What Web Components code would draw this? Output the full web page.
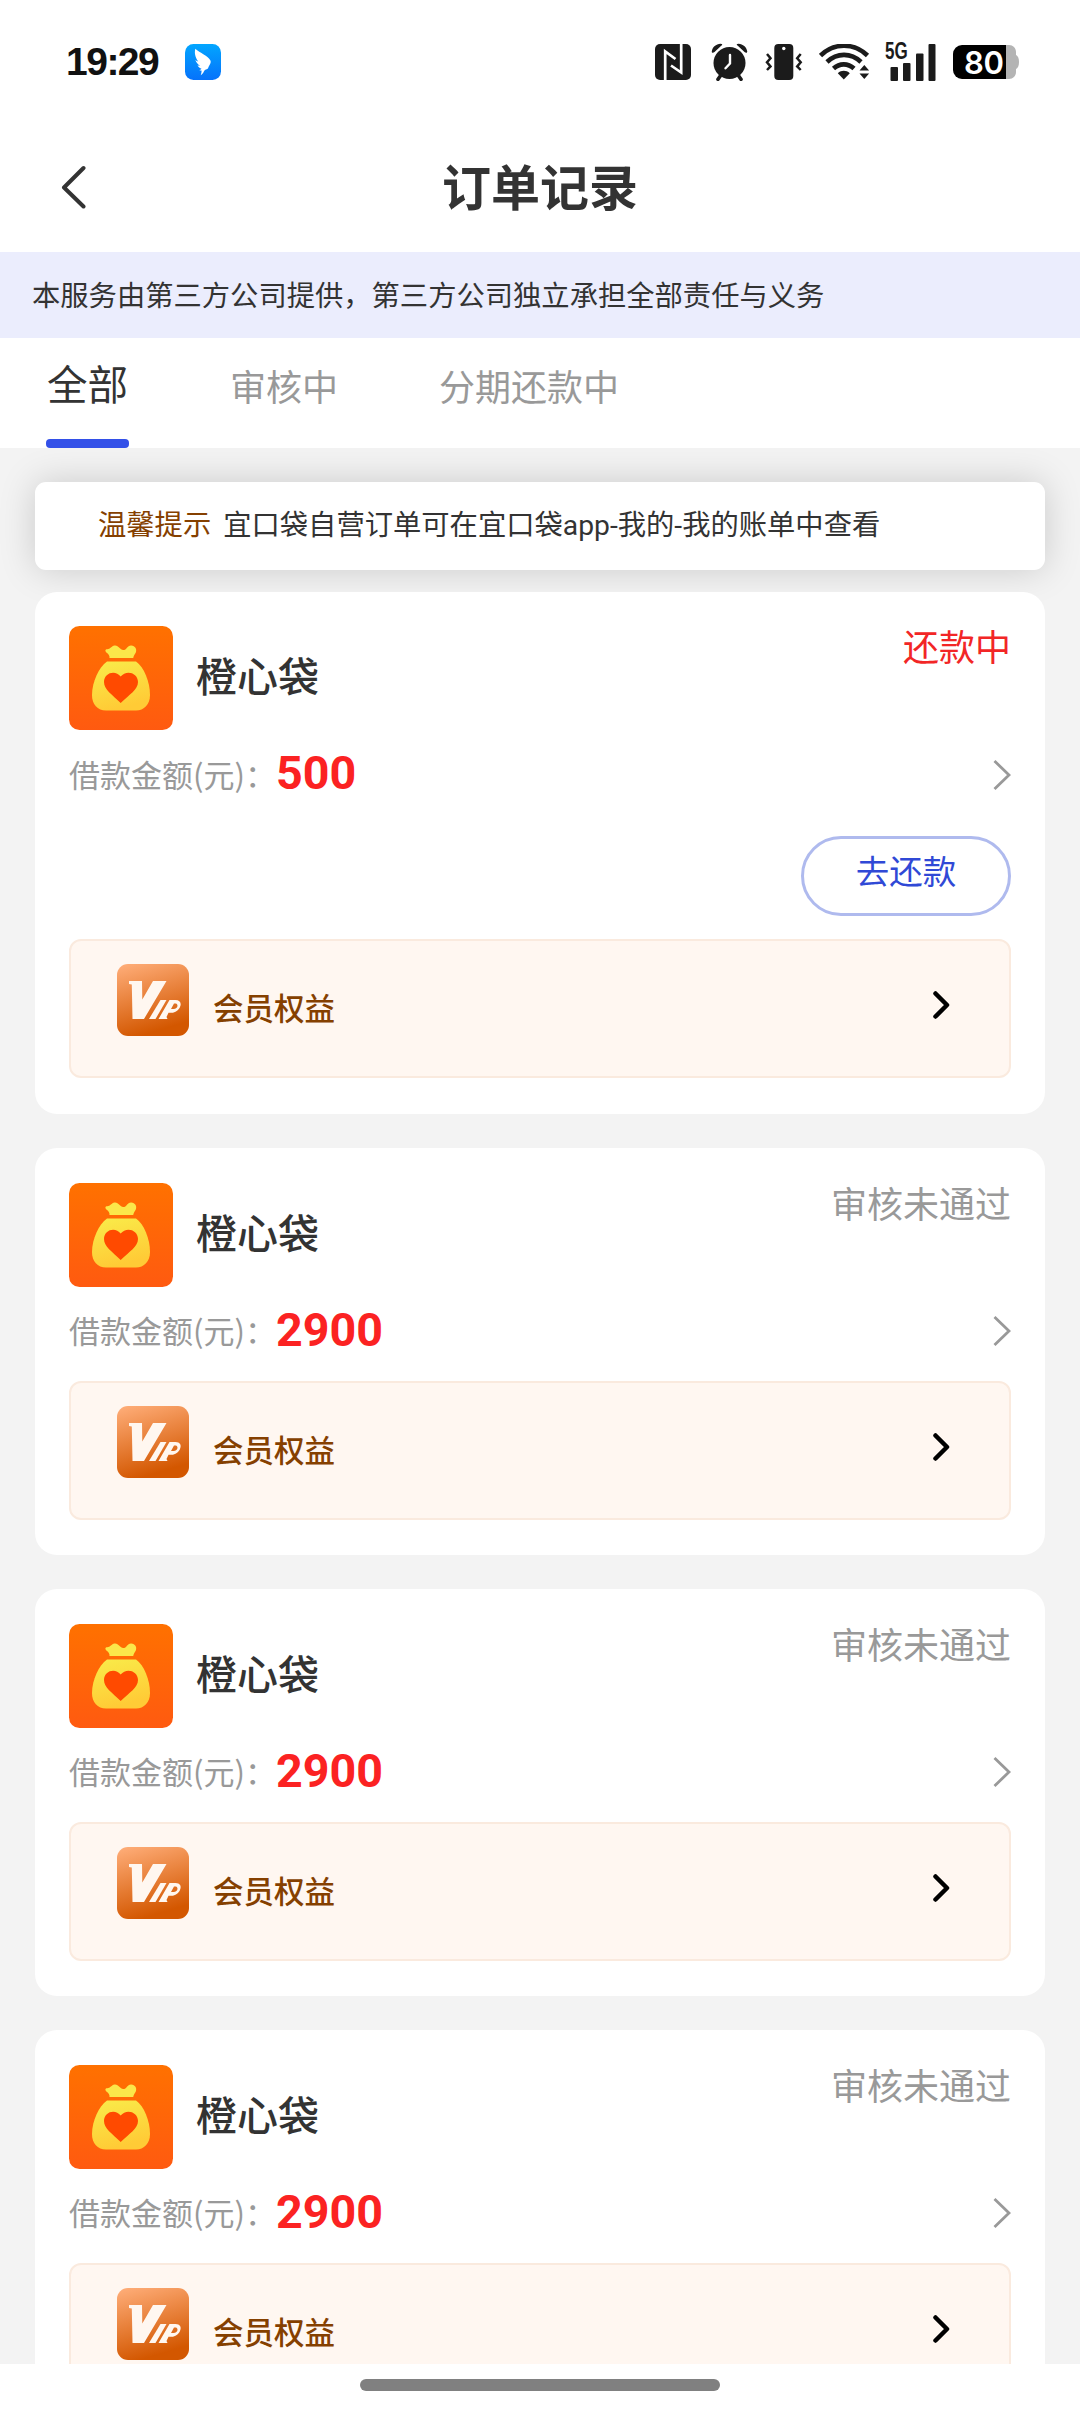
<!DOCTYPE html>
<html lang="zh-CN">
<head>
<meta charset="utf-8">
<title>订单记录</title>
<style>
html,body{margin:0;padding:0;background:#fff}
body{width:1080px;height:2412px;overflow:hidden;font-family:"Noto Sans CJK SC",sans-serif;color:#333}
</style>
</head>
<body>
<order-page></order-page>
<script>
function define(name, html) {
  const t = document.createElement('template');
  t.innerHTML = html;
  customElements.define(name, class extends HTMLElement {
    constructor() {
      super();
      this.attachShadow({mode: 'open'}).appendChild(t.content.cloneNode(true));
    }
  });
}

define('status-bar', `
<style>
:host{display:flex;align-items:center;height:124px;padding:0 61px 0 66px;box-sizing:border-box}
.time{font:700 39px/40px "Liberation Sans",sans-serif;letter-spacing:-1.5px;color:#111;width:119px;white-space:nowrap}
.icons{display:flex;align-items:center;margin-left:auto}
svg{display:block;flex:none}
.bat{display:flex;align-items:center;margin-left:17px;width:66px;height:34px}
.lvl{width:53px;height:34px;box-sizing:border-box;padding-left:11px;background:#000;border-radius:9px 0 0 9px;font:600 31px/36px Inter,sans-serif;letter-spacing:-.3px;color:#fff;white-space:nowrap}
.sig{display:flex;position:relative;margin-left:14px}
.g{position:absolute;left:0;top:-3px;font:700 23px/20px "Liberation Sans",sans-serif;color:#1b1b1b;transform:scaleX(.74);transform-origin:0 0}
</style>
<span class="time">19:29</span>
<svg width="36" height="36" viewBox="0 0 36 36"><defs><linearGradient id="a" x1="0" y1="0" x2="0" y2="1"><stop offset="0" stop-color="#02a6ff"/><stop offset="1" stop-color="#0672fb"/></linearGradient></defs><rect width="36" height="36" rx="8.5" fill="url(#a)"/><path d="M10.300 4.800c4.500 4.200 13 7.200 15 11.500 1.500 2.700-1.500 5.300-2.300 8.300-1.200.8-2.600 1-3.300 1.600-1 1.200-1.500 3.500-4 5.100.6-1.600 1-3.700.8-4.700-1.300.1-1.800-.3-2-.6 1-.3 1.800-.8 2-1.200-1.500-.3-3.200-2-4-3.500 1 .4 2 .6 2.700.6-1.600-1-4.200-3.500-4.900-6 1 .8 2 1.300 3 1.600C11.300 15 8.900 10.500 10.300 4.800z" fill="#fff"/></svg>
<div class="icons">
<svg width="36" height="36" viewBox="0 0 36 36"><rect width="36" height="36" rx="5" fill="#1b1b1b"/><path d="M10.200 36V7.500L20.500 15M26.200 0V28.500L16 21.500" fill="none" stroke="#fff" stroke-width="2.700"/></svg>
<svg style="margin-left:20px" width="37" height="38" viewBox="0 0 37 38"><circle cx="18.500" cy="20" r="16" fill="#1b1b1b"/><path d="m10 32-3 4.300M27 32l3 4.300" stroke="#1b1b1b" stroke-width="3.600" stroke-linecap="round"/><path d="M.8 8.200C1.500 4 5 1 9.500.700c2 0 2.200 1 1 1.900L3.500 9C2 10.300.6 10 .8 8.200zM36.200 8.200C35.500 4 32 1 27.500.700c-2 0-2.200 1-1 1.900L33.500 9c1.500 1.300 2.900 1 2.700-.8z" fill="#1b1b1b"/><path d="M19 12v8.500l-4.500 4.800" fill="none" stroke="#fff" stroke-width="2.400" stroke-linecap="round" stroke-linejoin="round"/></svg>
<svg style="margin-left:17px" width="38" height="36" viewBox="0 0 38 36"><rect x="9.300" width="19" height="36" rx="4" fill="#1b1b1b"/><circle cx="18.800" cy="4.500" r="1.700" fill="#fff"/><path d="m2 10 3.500 4.200-3.500 4 3.500 4.200L2 26M35.700 10l-3.500 4.200 3.500 4-3.500 4.200 3.500 3.600" fill="none" stroke="#1b1b1b" stroke-width="2.500"/></svg>
<svg style="margin-left:16px" width="52" height="36" viewBox="0 0 52 36"><path d="M1.500 11.500C15-1.500 35-1.500 48.500 11.500M8 18c10-9.500 24-9.500 34 0M14.500 24.500c6-5.500 14.500-5.500 20.500 0" fill="none" stroke="#1b1b1b" stroke-width="4.600"/><path d="M18.800 29.200c3.600-3.200 8.300-3.200 12 0L24.800 35.500z" fill="#1b1b1b"/><path d="m40.500 26.500 4.800-5.500 4.800 5.500zM40.500 29.500l4.800 5.500 4.800-5.500z" fill="#1b1b1b"/></svg>
<div class="sig"><svg width="51" height="37" viewBox="0 0 51 37"><g fill="#1b1b1b"><rect x="5.500" y="23" width="7.500" height="14" rx="1"/><rect x="18" y="19" width="7.500" height="18" rx="1"/><rect x="31" y="9.500" width="7.500" height="27.500" rx="1"/><rect x="43.500" y="0" width="7" height="37" rx="1"/></g></svg><span class="g">5G</span></div>
<div class="bat"><span class="lvl">80</span><svg width="13" height="34" viewBox="0 0 13 34"><path d="M0 0h3c4 0 7 3 7 7v3c2 1 3 3.500 3 7s-1 6-3 7v3c0 4-3 7-7 7H0z" fill="#b4b4b4"/></svg></div>
</div>`);

define('nav-bar', `
<style>
:host{display:grid;grid-template-columns:1fr auto 1fr;align-items:center;height:128px;padding:0 61px;box-sizing:border-box}
svg{display:block;margin-top:-3px}
h1{margin:0;font-size:49px;line-height:72px;font-weight:700;color:#333;padding-bottom:7px}
</style>
<svg width="25" height="44" viewBox="0 0 25 44"><path d="M22.500 3 3 22.500 22.500 41.500" fill="none" stroke="#333" stroke-width="4" stroke-linecap="round" stroke-linejoin="round"/></svg>
<h1><slot></slot></h1>`);

define('notice-band', `
<style>:host{display:flex;align-items:center;height:86px;padding:0 32px 3px;background:#ebedfd;font-size:28.300px;line-height:40px;color:#333;white-space:nowrap;box-sizing:border-box}</style><slot></slot>`);

define('tab-item', `
<style>
:host{display:flex;flex-direction:column;align-items:center;height:110px;font-size:36px;color:#999;white-space:nowrap}
.t{line-height:60px;padding-top:17px}
i{display:none;width:83px;height:9px;border-radius:4px;background:#3350e8;margin-top:auto}
:host([active]){font-size:40.500px;color:#333;width:83px}
:host([active]) .t{padding-top:15px}
:host([active]) i{display:block}
</style><span class="t"><slot></slot></span><i></i>`);

define('tab-strip', `<style>:host{display:flex;height:110px;padding-left:46px;gap:101px;background:#fff}</style><slot></slot>`);

define('tip-card', `
<style>
:host{display:flex;align-items:baseline;height:88px;padding:21px 0 0 63px;box-sizing:border-box;border-radius:11px;background:#fff;box-shadow:0 0 36px rgba(0,0,0,.17);font-size:28.300px;line-height:40px;color:#333;white-space:nowrap;gap:12px}
b{font-weight:400;color:#854000}
span{font-family:Roboto,"Noto Sans CJK SC",sans-serif}
</style><b><slot name="label"></slot></b><span><slot></slot></span>`);

define('bag-logo', `
<style>:host{display:block;width:104px;height:104px}svg{display:block}</style>
<svg width="104" height="104" viewBox="0 0 104 104"><defs><linearGradient id="o" x1="0" y1="0" x2="0" y2="1"><stop offset="0" stop-color="#ff7100"/><stop offset="1" stop-color="#ff5a10"/></linearGradient><linearGradient id="y" x1="0" y1="0" x2=".3" y2="1"><stop offset="0" stop-color="#f9ec4a"/><stop offset="1" stop-color="#ffcb36"/></linearGradient></defs>
<rect width="104" height="104" rx="10.500" fill="url(#o)"/>
<path d="M40.500 32c.2-2.500-1-4-2.800-5.300-1.500-1.200-2-3.500.3-3.500 3 .2 4.500-3.200 7.500-3.700 4-.6 5.500 4.500 8.700 4.500 3.600 0 4-4.800 8-4.600 4 .4 5.800 3.400 4.700 6.800-.7 2-2.200 3-2.700 5.800z" fill="#fbe74a"/>
<path d="M38 35.500h29c8 5.500 14 20.500 14 33.500 0 9.500-6 15.500-14 15.500H37c-8.500 0-14-6-14-15.500 0-13 7-28 15-33.500z" fill="url(#y)"/>
<path d="M51.700 77C43 68.500 35 63.500 35 56c0-9.500 11.500-12.500 16.700-5.500C57 43.500 69 46.500 69 56c0 7.500-8.500 12.500-17.300 21z" fill="#ff4a00"/></svg>`);

define('vip-logo', `
<style>:host{display:block;width:72px;height:72px}svg{display:block}</style>
<svg width="72" height="72" viewBox="0 0 72 72"><defs><linearGradient id="v" x1=".2" y1="0" x2=".5" y2="1"><stop offset="0" stop-color="#fdaa74"/><stop offset=".95" stop-color="#d35700"/></linearGradient></defs><rect width="72" height="72" rx="11" fill="url(#v)"/><g fill="#fff7f0"><path d="M12 17h13l.3 18.500L36 17h13.500L27 55H15.500L14.800 20.500 12 20z"/><path d="M43.500 36h6L38.500 55h-6.500z"/><path fill-rule="evenodd" d="M52.500 36h6c4.500 0 6.300 3.200 4.500 7-1.500 3.200-4.500 5.800-8.500 5.800h-3L49.500 53l1 2H41.500zM54 45h2.500c2.300 0 4-1.500 4-3.200s-1-2.300-2.500-2.300h-1z"/></g></svg>`);

define('vip-row', `
<style>
:host{display:flex;align-items:flex-start;height:139px;box-sizing:border-box;border:2px solid #faeade;border-radius:12px;background:#fff7f1;padding:23px 59px 0 46px;color:#854000}
span{font-size:30.500px;line-height:44px;font-weight:500;margin:21px 0 0 24px}
.c{display:block;margin:26px 0 0 auto}
</style>
<vip-logo></vip-logo><span><slot></slot></span>
<svg class="c" width="18" height="30" viewBox="0 0 18 30"><path d="M3.500 3.500 15 15 3.500 26.500" fill="none" stroke="#000" stroke-width="4.500" stroke-linecap="round" stroke-linejoin="round"/></svg>`);

define('order-card', `
<style>
:host{display:block;box-sizing:border-box;background:#fff;border-radius:22px;padding:35px 34px 34px;height:407px;flex:none}
:host([repay]){height:522px;padding-top:34px}
.head{display:flex;height:104px;align-items:flex-start}
.name{font-size:41px;line-height:60px;font-weight:500;color:#333;margin:18px 0 0 23px}
.st{margin:-3px 0 0 auto;font-size:36px;line-height:44px;color:#999}
:host([repay]) .st{color:#f22626;margin-top:-3px}
.amt{display:flex;align-items:center;height:88px;font-size:31px;line-height:44px;color:#999;white-space:nowrap}
:host([repay]) .amt{height:89px}
.amt b{font:700 46.600px/50px Roboto,sans-serif;color:#fb2222;width:160px;padding-bottom:3px}
.amt .l{width:207px;padding-bottom:2px}
.amt svg{display:block;margin-left:auto}
.act{display:none;justify-content:flex-end;height:120px;padding-top:17px;box-sizing:border-box}
:host([repay]) .act{display:flex}
.btn{box-sizing:border-box;width:210px;height:80px;border:3px solid #afbaee;border-radius:40px;text-align:center;font-size:33.500px;line-height:62px;color:#3049d6}
vip-row{margin-top:6px}
:host([repay]) vip-row{margin-top:0}
</style>
<div class="head"><bag-logo></bag-logo><span class="name"><slot name="name"></slot></span><span class="st"><slot name="status"></slot></span></div>
<div class="amt"><span class="l">借款金额(元)：</span><b><slot name="amount"></slot></b><svg width="19" height="32" viewBox="0 0 19 32"><path d="M2.500 2 17 16 2.500 30" fill="none" stroke="#999" stroke-width="2.800"/></svg></div>
<div class="act"><div class="btn"><slot name="action"></slot></div></div>
<vip-row>会员权益</vip-row>`);

define('home-bar', `<style>:host{display:flex;height:48px;background:#fff;justify-content:center;padding-top:15px;box-sizing:border-box}i{width:360px;height:12px;border-radius:6px;background:#808080}</style><i></i>`);

define('order-page', `
<style>
:host{display:flex;flex-direction:column;width:1080px;height:2412px;overflow:hidden;background:#fff}
.list{flex:1;min-height:0;overflow:hidden;background:#f3f3f3;padding:34px 35px 0;display:flex;flex-direction:column;gap:34px}
tip-card{margin-bottom:-12px;flex:none}
order-card{position:relative}
status-bar,nav-bar,notice-band,tab-strip,home-bar{flex:none}
</style>
<status-bar></status-bar>
<nav-bar>订单记录</nav-bar>
<notice-band>本服务由第三方公司提供，第三方公司独立承担全部责任与义务</notice-band>
<tab-strip><tab-item active>全部</tab-item><tab-item>审核中</tab-item><tab-item>分期还款中</tab-item></tab-strip>
<div class="list">
<tip-card><span slot="label">温馨提示</span>宜口袋自营订单可在宜口袋app-我的-我的账单中查看</tip-card>
<order-card repay><span slot="name">橙心袋</span><span slot="status">还款中</span><span slot="amount">500</span><span slot="action">去还款</span></order-card>
<order-card><span slot="name">橙心袋</span><span slot="status">审核未通过</span><span slot="amount">2900</span></order-card>
<order-card><span slot="name">橙心袋</span><span slot="status">审核未通过</span><span slot="amount">2900</span></order-card>
<order-card><span slot="name">橙心袋</span><span slot="status">审核未通过</span><span slot="amount">2900</span></order-card>
</div>
<home-bar></home-bar>`);
</script>
</body>
</html>
